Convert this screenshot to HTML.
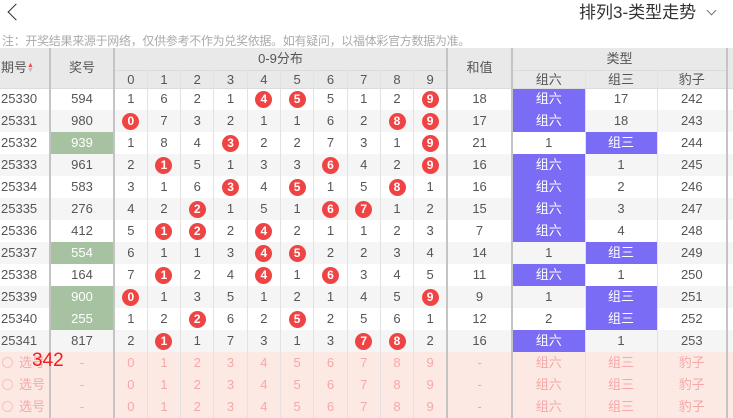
<!DOCTYPE html>
<html><head><meta charset="utf-8"><style>
*{margin:0;padding:0;box-sizing:border-box}
body{width:733px;height:411px;overflow:hidden;background:#fff;font-family:"Liberation Sans","Noto Sans CJK SC",sans-serif;color:#555;position:relative}
.back{position:absolute;left:6px;top:4px;width:12px;height:12px;border-left:1.5px solid #333;border-bottom:1.5px solid #333;transform:translate(4px,2px) rotate(45deg)}
.title{position:absolute;left:579px;top:2px;font-size:17px;color:#333;line-height:22px}
.chev{position:absolute;left:708px;top:7px;width:7px;height:7px;border-right:1px solid #777;border-bottom:1px solid #777;transform:rotate(45deg)}
.note{position:absolute;left:2px;top:34px;font-size:12px;color:#aaa;line-height:15px;letter-spacing:-0.3px}
table{position:absolute;left:0;top:48px;border-collapse:collapse;table-layout:fixed;width:733px;font-size:13px}
td{text-align:center;height:22px;padding:0;border-left:1px solid #e2e2e2;white-space:nowrap;line-height:20px}
tr.h td{background:#e9e9e9;color:#555;border-bottom:1px solid #dcdcdc}
tr.h2 td{height:18px;line-height:17px}
tr.g td{background:#f5f5f5}
td.L{border-left:2px solid #c4c4c4}
td.p{background:#7b6cf6 !important;color:#fff}
td.gr{background:#a6c2a0 !important;color:#fff}
td.f{text-align:left;padding-left:1px;border-left:none}
.b{display:inline-block;width:17px;height:17px;border-radius:50%;background:#f04444;color:#fff;line-height:17px;font-size:12px;font-weight:bold}
tr.k td{background:#fde9e4;color:#f5a8a8}
.c{display:inline-block;width:11px;height:11px;border:1px solid #f7c0c0;border-radius:50%;vertical-align:-1px;margin:0 6px 0 1px}
.big{position:absolute;left:32px;top:350px;color:#f01e1e;font-size:19px}
.arr{display:inline-block;vertical-align:middle;font-size:7px;line-height:5px;color:#f44}
</style></head><body>
<div class="back"></div>
<div class="title">排列3-类型走势</div><div class="chev"></div>
<div class="note">注：开奖结果来源于网络，仅供参考不作为兑奖依据。如有疑问，以福体彩官方数据为准。</div>
<table>
<colgroup><col style="width:50px"><col style="width:64px"><col span="10" style="width:33.3px"><col style="width:65px"><col style="width:73px"><col style="width:72px"><col style="width:70px"><col style="width:6px"></colgroup>
<tr class="h"><td class="f" rowspan="2">期号<span class="arr">▲<br><span style="color:#bbb">▼</span></span></td><td class="L" rowspan="2">奖号</td><td class="L" colspan="10">0-9分布</td><td class="L" rowspan="2">和值</td><td class="L" colspan="3">类型</td><td class="L" rowspan="2"></td></tr>
<tr class="h h2"><td class="L">0</td><td>1</td><td>2</td><td>3</td><td>4</td><td>5</td><td>6</td><td>7</td><td>8</td><td>9</td><td class="L">组六</td><td>组三</td><td>豹子</td></tr>
<tr><td class="f">25330</td><td class="L">594</td><td class="L">1</td><td>6</td><td>2</td><td>1</td><td><span class="b">4</span></td><td><span class="b">5</span></td><td>5</td><td>1</td><td>2</td><td><span class="b">9</span></td><td class="L">18</td><td class="L p">组六</td><td>17</td><td>242</td><td class="L"></td></tr>
<tr class="g"><td class="f">25331</td><td class="L">980</td><td class="L"><span class="b">0</span></td><td>7</td><td>3</td><td>2</td><td>1</td><td>1</td><td>6</td><td>2</td><td><span class="b">8</span></td><td><span class="b">9</span></td><td class="L">17</td><td class="L p">组六</td><td>18</td><td>243</td><td class="L"></td></tr>
<tr><td class="f">25332</td><td class="L gr">939</td><td class="L">1</td><td>8</td><td>4</td><td><span class="b">3</span></td><td>2</td><td>2</td><td>7</td><td>3</td><td>1</td><td><span class="b">9</span></td><td class="L">21</td><td class="L">1</td><td class="p">组三</td><td>244</td><td class="L"></td></tr>
<tr class="g"><td class="f">25333</td><td class="L">961</td><td class="L">2</td><td><span class="b">1</span></td><td>5</td><td>1</td><td>3</td><td>3</td><td><span class="b">6</span></td><td>4</td><td>2</td><td><span class="b">9</span></td><td class="L">16</td><td class="L p">组六</td><td>1</td><td>245</td><td class="L"></td></tr>
<tr><td class="f">25334</td><td class="L">583</td><td class="L">3</td><td>1</td><td>6</td><td><span class="b">3</span></td><td>4</td><td><span class="b">5</span></td><td>1</td><td>5</td><td><span class="b">8</span></td><td>1</td><td class="L">16</td><td class="L p">组六</td><td>2</td><td>246</td><td class="L"></td></tr>
<tr class="g"><td class="f">25335</td><td class="L">276</td><td class="L">4</td><td>2</td><td><span class="b">2</span></td><td>1</td><td>5</td><td>1</td><td><span class="b">6</span></td><td><span class="b">7</span></td><td>1</td><td>2</td><td class="L">15</td><td class="L p">组六</td><td>3</td><td>247</td><td class="L"></td></tr>
<tr><td class="f">25336</td><td class="L">412</td><td class="L">5</td><td><span class="b">1</span></td><td><span class="b">2</span></td><td>2</td><td><span class="b">4</span></td><td>2</td><td>1</td><td>1</td><td>2</td><td>3</td><td class="L">7</td><td class="L p">组六</td><td>4</td><td>248</td><td class="L"></td></tr>
<tr class="g"><td class="f">25337</td><td class="L gr">554</td><td class="L">6</td><td>1</td><td>1</td><td>3</td><td><span class="b">4</span></td><td><span class="b">5</span></td><td>2</td><td>2</td><td>3</td><td>4</td><td class="L">14</td><td class="L">1</td><td class="p">组三</td><td>249</td><td class="L"></td></tr>
<tr><td class="f">25338</td><td class="L">164</td><td class="L">7</td><td><span class="b">1</span></td><td>2</td><td>4</td><td><span class="b">4</span></td><td>1</td><td><span class="b">6</span></td><td>3</td><td>4</td><td>5</td><td class="L">11</td><td class="L p">组六</td><td>1</td><td>250</td><td class="L"></td></tr>
<tr class="g"><td class="f">25339</td><td class="L gr">900</td><td class="L"><span class="b">0</span></td><td>1</td><td>3</td><td>5</td><td>1</td><td>2</td><td>1</td><td>4</td><td>5</td><td><span class="b">9</span></td><td class="L">9</td><td class="L">1</td><td class="p">组三</td><td>251</td><td class="L"></td></tr>
<tr><td class="f">25340</td><td class="L gr">255</td><td class="L">1</td><td>2</td><td><span class="b">2</span></td><td>6</td><td>2</td><td><span class="b">5</span></td><td>2</td><td>5</td><td>6</td><td>1</td><td class="L">12</td><td class="L">2</td><td class="p">组三</td><td>252</td><td class="L"></td></tr>
<tr class="g"><td class="f">25341</td><td class="L">817</td><td class="L">2</td><td><span class="b">1</span></td><td>1</td><td>7</td><td>3</td><td>1</td><td>3</td><td><span class="b">7</span></td><td><span class="b">8</span></td><td>2</td><td class="L">16</td><td class="L p">组六</td><td>1</td><td>253</td><td class="L"></td></tr>
<tr class="k"><td class="f"><span class="c"></span>选号</td><td class="L">-</td><td class="L">0</td><td>1</td><td>2</td><td>3</td><td>4</td><td>5</td><td>6</td><td>7</td><td>8</td><td>9</td><td class="L">-</td><td class="L">组六</td><td>组三</td><td>豹子</td><td class="L"></td></tr>
<tr class="k"><td class="f"><span class="c"></span>选号</td><td class="L">-</td><td class="L">0</td><td>1</td><td>2</td><td>3</td><td>4</td><td>5</td><td>6</td><td>7</td><td>8</td><td>9</td><td class="L">-</td><td class="L">组六</td><td>组三</td><td>豹子</td><td class="L"></td></tr>
<tr class="k"><td class="f"><span class="c"></span>选号</td><td class="L">-</td><td class="L">0</td><td>1</td><td>2</td><td>3</td><td>4</td><td>5</td><td>6</td><td>7</td><td>8</td><td>9</td><td class="L">-</td><td class="L">组六</td><td>组三</td><td>豹子</td><td class="L"></td></tr>
</table>
<div class="big">342</div>
</body></html>
